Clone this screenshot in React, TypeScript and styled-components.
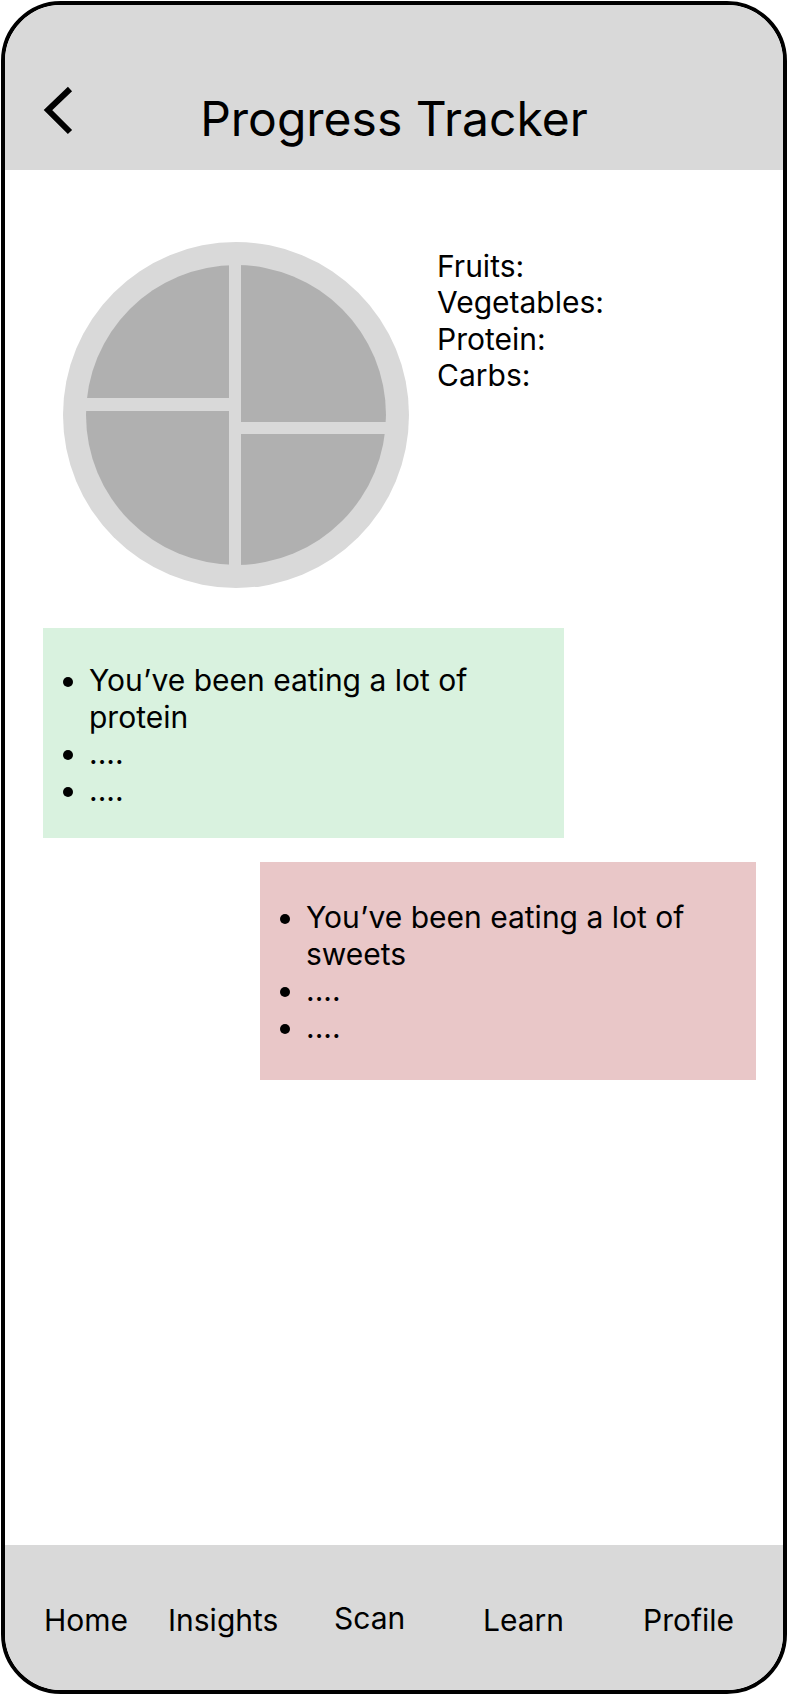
import React from "react";
import styled, { createGlobalStyle } from "styled-components";

const GlobalStyle = createGlobalStyle`
  html, body {
    margin: 0;
    padding: 0;
    background: #ffffff;
  }
  body {
    font-family: Inter, "Noto Sans", "Liberation Sans", sans-serif;
    color: #000000;
  }
  * { box-sizing: border-box; }
`;

const Page = styled.div`
  padding: 1px;
  width: 788px;
`;

const Frame = styled.div`
  width: 786px;
  height: 1693px;
  border: 4px solid #000000;
  border-radius: 60px;
  overflow: hidden;
  display: flex;
  flex-direction: column;
  background: #ffffff;
`;

const Header = styled.header`
  height: 165px;
  background: #d9d9d9;
  display: grid;
  grid-template-columns: 1fr auto 1fr;
  align-items: start;
  padding: 80px 38px 0;
`;

const BackButton = styled.button`
  justify-self: start;
  width: 32px;
  height: 50px;
  padding: 0;
  border: 0;
  background: transparent;
  display: flex;
  cursor: pointer;
`;

const Title = styled.h1`
  margin: 5px 0 0;
  font-size: 48px;
  line-height: 58px;
  font-weight: 400;
  white-space: nowrap;
`;

const Content = styled.main`
  flex: 1;
  display: flex;
  flex-direction: column;
  align-items: flex-start;
  padding: 72px 0 0 38px;
`;

const SummaryRow = styled.section`
  display: flex;
  align-items: flex-start;
  gap: 28px;
  padding-left: 20px;
`;

const Legend = styled.div`
  margin-top: 6px;
  display: flex;
  flex-direction: column;
  font-size: 30px;
  line-height: 36.3px;
`;

const Note = styled.div<{ $bg: string; $width: number; $pt: number; $pb: number; $offset: number }>`
  background: ${(p) => p.$bg};
  width: ${(p) => p.$width}px;
  margin-left: ${(p) => p.$offset}px;
  padding: ${(p) => p.$pt}px 0 ${(p) => p.$pb}px 0;
`;

const BulletList = styled.ul`
  margin: 0;
  padding-left: 46px;
  padding-right: 20px;
  font-size: 30px;
  line-height: 36.5px;
  list-style: disc;
`;

const Gap = styled.div<{ $h: number }>`
  height: ${(p) => p.$h}px;
`;

const NavBar = styled.nav`
  height: 145px;
  background: #d9d9d9;
  display: grid;
  grid-template-columns: 124px 166px 149px 160px 1fr;
  padding: 57px 0 0 39px;
  font-size: 30px;
  line-height: 36px;
`;

const NavItem = styled.span<{ $lift?: number }>`
  white-space: nowrap;
  margin-top: ${(p) => -(p.$lift || 0)}px;
`;

const Plate: React.FC = () => (
  <svg width="346" height="346" viewBox="0 0 346 346" aria-label="Food plate chart">
    <circle cx="173" cy="173" r="173" fill="#d9d9d9" />
    <circle cx="173" cy="173" r="150" fill="#b0b0b0" />
    <rect x="166" y="20" width="12" height="306" fill="#d9d9d9" />
    <rect x="20" y="156" width="146" height="13" fill="#d9d9d9" />
    <rect x="178" y="180" width="148" height="12" fill="#d9d9d9" />
  </svg>
);

const Chevron: React.FC = () => (
  <svg width="32" height="50" viewBox="0 0 32 50" fill="none">
    <path d="M27 4 L5 25 L27 47" stroke="#000" strokeWidth="6" strokeLinecap="butt" strokeLinejoin="miter" />
  </svg>
);

export default function App() {
  return (
    <Page>
      <GlobalStyle />
      <Frame>
        <Header>
          <BackButton aria-label="Back">
            <Chevron />
          </BackButton>
          <Title>Progress Tracker</Title>
          <div />
        </Header>
        <Content>
          <SummaryRow>
            <Plate />
            <Legend>
              <span>Fruits:</span>
              <span>Vegetables:</span>
              <span>Protein:</span>
              <span>Carbs:</span>
            </Legend>
          </SummaryRow>
          <Gap $h={40} />
          <Note $bg="#d9f2df" $width={521} $pt={34} $pb={30} $offset={0}>
            <BulletList>
              <li>You’ve been eating a lot of protein</li>
              <li>....</li>
              <li>....</li>
            </BulletList>
          </Note>
          <Gap $h={24} />
          <Note $bg="#e9c7c8" $width={496} $pt={37} $pb={35} $offset={217}>
            <BulletList>
              <li>You’ve been eating a lot of sweets</li>
              <li>....</li>
              <li>....</li>
            </BulletList>
          </Note>
        </Content>
        <NavBar>
          <NavItem>Home</NavItem>
          <NavItem>Insights</NavItem>
          <NavItem $lift={2}>Scan</NavItem>
          <NavItem>Learn</NavItem>
          <NavItem>Profile</NavItem>
        </NavBar>
      </Frame>
    </Page>
  );
}
